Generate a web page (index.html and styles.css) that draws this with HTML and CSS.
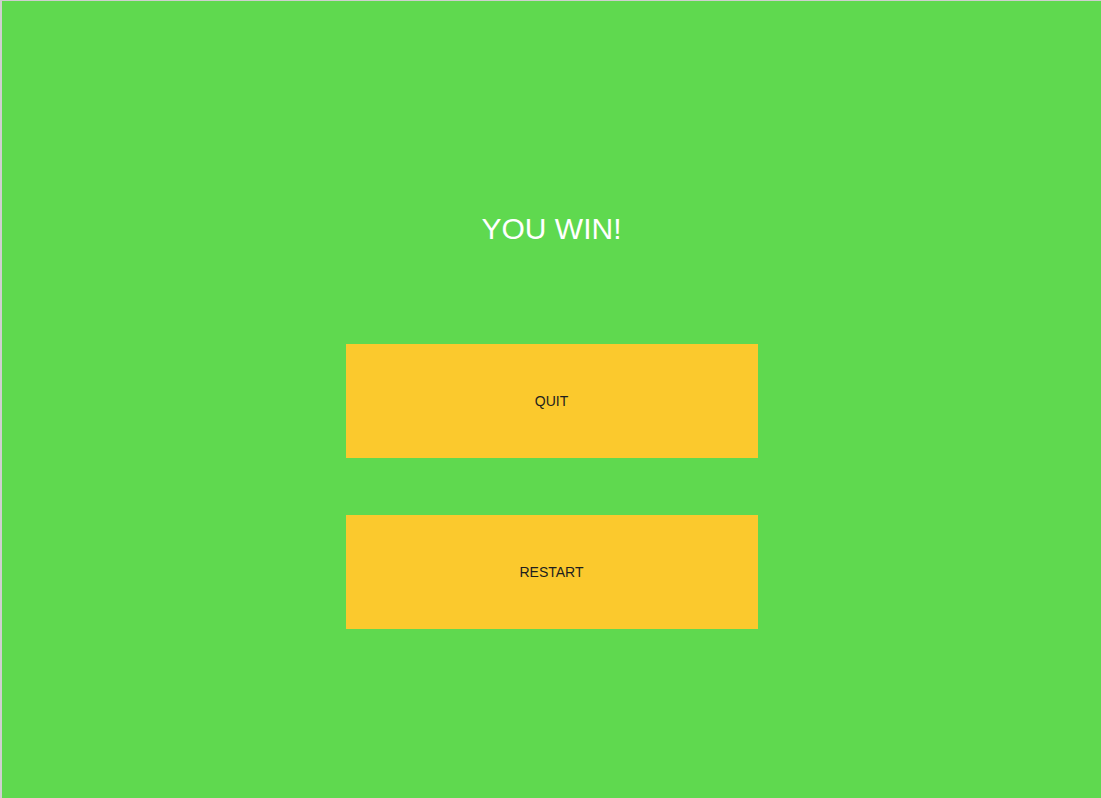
FILE: index.html
```html
<!DOCTYPE html>
<html>
<head>
<meta charset="utf-8">
<link rel="stylesheet" href="styles.css">
</head>
<body>
<div class="screen">
  <h1 class="title">YOU WIN!</h1>
  <div class="buttons">
    <button class="btn">QUIT</button>
    <button class="btn">RESTART</button>
  </div>
</div>
</body>
</html>
```
FILE: styles.css
```css
html, body {
  margin: 0;
  padding: 0;
  height: 100%;
}
body {
  font-family: "Liberation Sans", Arial, sans-serif;
  background: #5fd94f;
}
.screen {
  box-sizing: border-box;
  height: 798px;
  border-left: 2px solid #cfcfcf;
  border-top: 1px solid #cfcfcf;
  background: #5fd94f;
  display: flex;
  flex-direction: column;
  align-items: center;
}
.title {
  margin: 211px 0 0;
  font-size: 30px;
  font-weight: normal;
  color: #ffffff;
  line-height: 34px;
}
.buttons {
  margin-top: 98px;
  display: flex;
  flex-direction: column;
  gap: 57px;
}
.btn {
  width: 412px;
  height: 114px;
  border: none;
  background: #fbc92d;
  color: #1e1e1e;
  font-family: "Liberation Sans", Arial, sans-serif;
  font-size: 14px;
  padding: 0;
}
```
